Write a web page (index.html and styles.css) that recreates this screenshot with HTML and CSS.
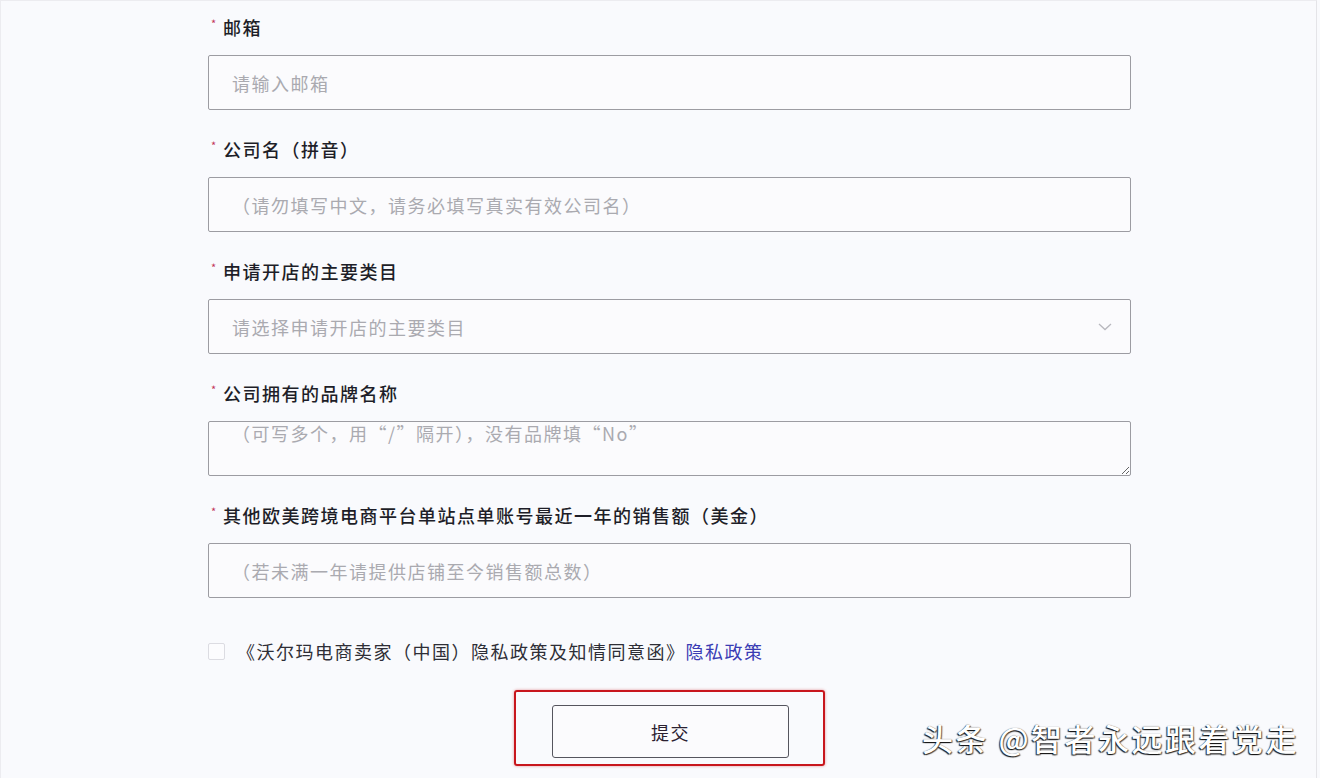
FILE: index.html
```html
<!DOCTYPE html>
<html lang="zh-CN">
<head>
<meta charset="utf-8">
<title>表单</title>
<link rel="stylesheet" href="styles.css">
</head>
<body>
<div class="page">
  <form class="form">
    <div class="field">
      <label class="label"><span class="req">*</span>邮箱</label>
      <input class="control" type="text" placeholder="请输入邮箱">
    </div>
    <div class="field">
      <label class="label"><span class="req">*</span>公司名（拼音）</label>
      <input class="control" type="text" placeholder="（请勿填写中文，请务必填写真实有效公司名）">
    </div>
    <div class="field">
      <label class="label"><span class="req">*</span>申请开店的主要类目</label>
      <div class="control select">
        <span class="ph">请选择申请开店的主要类目</span>
        <svg class="chev" width="14" height="8" viewBox="0 0 14 8"><polyline points="1,1 7,6.5 13,1" fill="none" stroke="#b8b8be" stroke-width="1.3"/></svg>
      </div>
    </div>
    <div class="field">
      <label class="label"><span class="req">*</span>公司拥有的品牌名称</label>
      <textarea class="control area" placeholder="（可写多个，用“/”隔开），没有品牌填“No”"></textarea>
    </div>
    <div class="field">
      <label class="label"><span class="req">*</span>其他欧美跨境电商平台单站点单账号最近一年的销售额（美金）</label>
      <input class="control" type="text" placeholder="（若未满一年请提供店铺至今销售额总数）">
    </div>
    <div class="agree">
      <span class="box"></span>
      <span class="agree-text">《沃尔玛电商卖家（中国）隐私政策及知情同意函》<a class="link" href="#">隐私政策</a></span>
    </div>
    <div class="submit-wrap">
      <button class="submit" type="button">提交</button>
    </div>
  </form>
  <div class="watermark">头条 @智者永远跟着党走</div>
</div>
</body>
</html>
```

FILE: styles.css
```css
* { box-sizing: border-box; }
html, body { margin: 0; padding: 0; }
body {
  background: #f9fafd;
  font-family: "Noto Sans CJK SC", "Noto Sans", sans-serif;
  color: #1e1e28;
}
.page {
  position: relative;
  width: 1317px;
  height: 778px;
  border-top: 1px solid #ececf0;
  border-left: 1px solid #ececf0;
  border-right: 1px solid #e4e4e8;
  overflow: hidden;
}
.form {
  width: 923px;
  margin-left: 207px;
  padding-top: 15px;
  display: flex;
  flex-direction: column;
}
.field {
  display: flex;
  flex-direction: column;
  margin-bottom: 28px;
}
.label {
  font-size: 18px;
  font-weight: 500;
  line-height: 22px;
  letter-spacing: 1.5px;
  margin-bottom: 17px;
  display: flex;
  align-items: flex-start;
}
.req {
  color: #c2345a;
  font-size: 11px;
  line-height: 14px;
  width: 15px;
  padding-left: 3px;
  font-weight: 400;
}
.control {
  height: 55px;
  width: 100%;
  border: 1px solid #9c9ca2;
  border-radius: 2px;
  background: #fbfbfd;
  padding: 0 23px;
  font-family: "Noto Sans CJK SC", "Noto Sans", sans-serif;
  font-size: 18px;
  letter-spacing: 1.5px;
  color: #333;
  outline: none;
}
.control::placeholder { color: #aaaab0; }
.select {
  display: flex;
  align-items: center;
  justify-content: space-between;
  padding-right: 18px;
}
.ph { color: #aaaab0; }
.chev { display: block; }
.area {
  resize: vertical;
  padding-top: 0;
  line-height: 22px;
}
.agree {
  display: flex;
  align-items: center;
  margin-top: 14px;
  height: 22px;
}
.box {
  width: 17px;
  height: 17px;
  border: 1px solid #dcdce2;
  border-radius: 2px;
  background: #fcfcfe;
  margin-right: 12px;
}
.agree-text {
  font-size: 18px;
  letter-spacing: 1.5px;
  color: #2e2e36;
  line-height: 22px;
}
.link {
  color: #3a3cb4;
  text-decoration: none;
}
.submit-wrap {
  align-self: center;
  margin-top: 28px;
  border: 2px solid #c8161d;
  border-radius: 3px;
  box-shadow: 0 0 3px rgba(200, 22, 29, 0.45);
  padding: 13px 34px 6px 36px;
}
.submit {
  display: block;
  width: 237px;
  height: 53px;
  border: 1px solid #55555e;
  border-radius: 3px;
  background: #fbfbfd;
  font-family: "Noto Sans CJK SC", "Noto Sans", sans-serif;
  font-size: 18px;
  letter-spacing: 1.5px;
  color: #2a2030;
}
.watermark {
  position: absolute;
  left: 921px;
  top: 717px;
  font-size: 31px;
  font-weight: 500;
  line-height: 40px;
  letter-spacing: 2.5px;
  color: #ffffff;
  white-space: nowrap;
  text-shadow: -1px 1px 1px rgba(0,0,0,0.85), 1px 1px 1px rgba(0,0,0,0.6), 0 0 1px rgba(0,0,0,0.6);
}
```
